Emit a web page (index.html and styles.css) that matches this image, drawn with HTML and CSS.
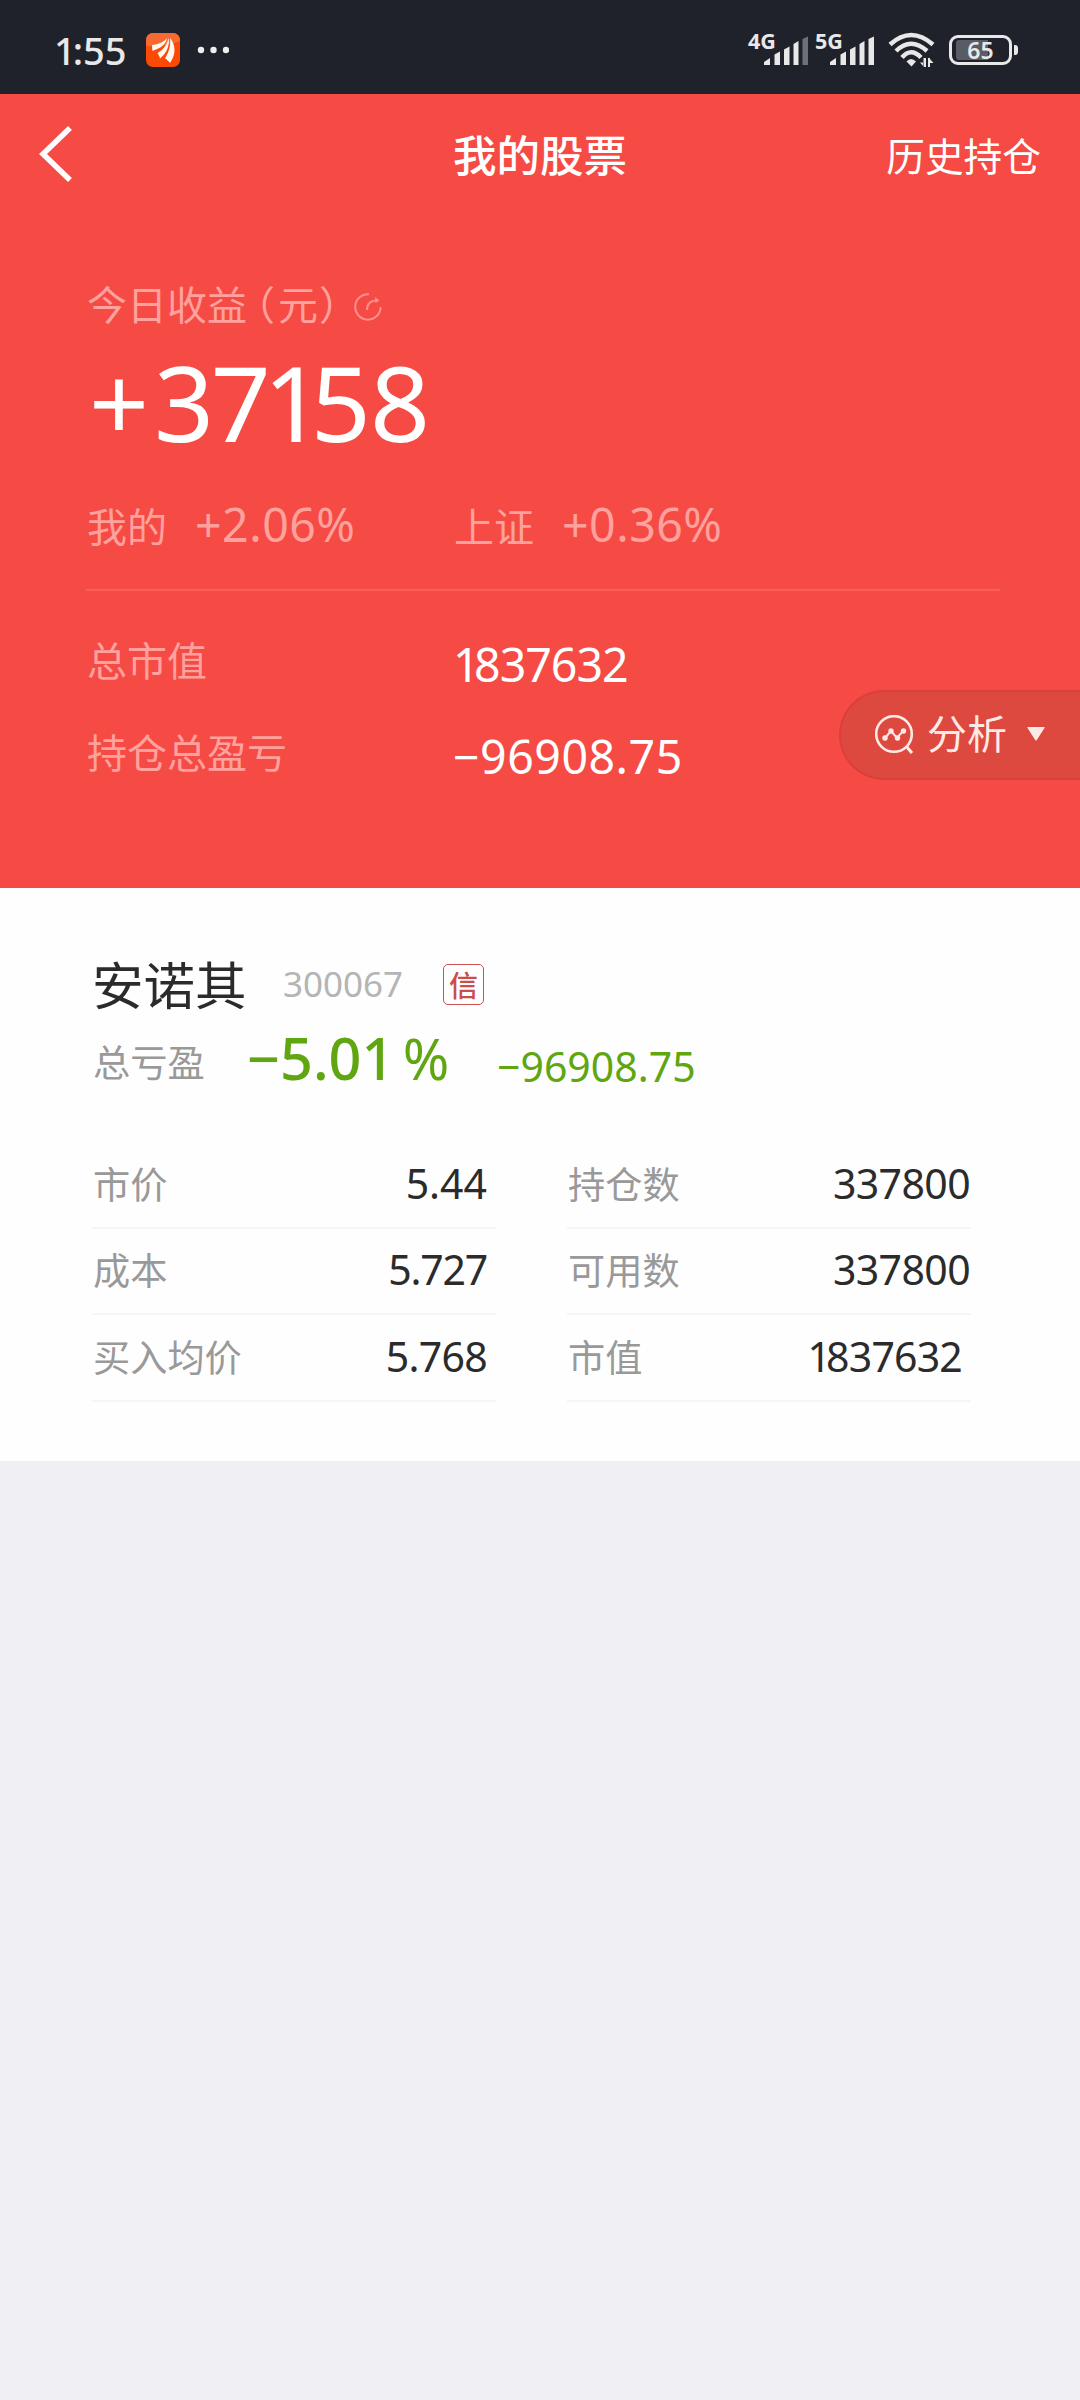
FILE: index.html
```html
<!DOCTYPE html>
<html lang="zh-CN">
<head>
<meta charset="utf-8">
<title>我的股票</title>
<link rel="stylesheet" href="styles.css">
</head>
<body>
<div class="status">
  <span class="clock"><span class="one">1</span>:55</span>
  <svg class="app-icon" width="34" height="34" viewBox="0 0 34 34">
    <rect width="34" height="34" rx="7" fill="#fc4a06"/>
    <path d="M7 0h20a7 7 0 0 1 7 7v1C24 12 12 14 0 13V7a7 7 0 0 1 7-7z" fill="#f96a33"/>
    <g fill="#fffaf2">
      <path d="M6 12C13 11.500 18 9 21 5C20 11 15 15 6.500 18C6.200 16 6 14 6 12z"/>
      <path d="M11.500 20C17 17 21 12 22.500 5C24 12 21 20 14 25.500C13.500 23 12.500 21.500 11.500 20z"/>
      <path d="M19 25.500C23 19 25 12 24 5C29.500 11 30.500 21 24 30C22.500 28 21 26.500 19 25.500z"/>
    </g>
  </svg>
  <svg class="dots" width="32" height="8" viewBox="0 0 32 8" fill="#eee"><circle cx="4" cy="4" r="3.200"/><circle cx="16.500" cy="4" r="3.200"/><circle cx="29" cy="4" r="3.200"/></svg>
  <div class="signals">
    <div class="net"><span class="gen">4G</span>
      <svg width="45" height="30" viewBox="0 0 45 30" fill="#e8e8e8"><path d="M0 29v-3l6-4v7zM10.500 29V18.500l5.500-3V29zM20 29V13.500l5.500-3V29zM29.500 29V8l5-3v24z"/><path d="M38.500 29V3L44 .5V29z" fill="#6d7078"/></svg>
    </div>
    <div class="net second"><span class="gen">5G</span>
      <svg width="45" height="30" viewBox="0 0 45 30" fill="#e8e8e8"><path d="M0 29v-3l6-4v7zM10.500 29V18.500l5.500-3V29zM20 29V13.500l5.500-3V29zM29.500 29V8l5-3v24zM38.500 29V3L44 .5V29z"/></svg>
    </div>
    <svg class="wifi" width="47" height="36" viewBox="0 0 47 36">
      <g fill="none" stroke="#e8e8e8" stroke-width="4.500"><path d="M2 12.500Q23 -6.500 45 12.500"/><path d="M8 19Q23 4.500 39 19"/><path d="M14 25.500Q23 15 33 25.500"/></g>
      <path d="M18.500 29.500Q23 24.500 28 29.500L23.500 34.500z" fill="#e8e8e8"/>
      <path d="M35.500 26v9h2.500v-9zM36 35l-4-4.500h4zM40 26h2v9h-2zM41 26l4.500 5H41z" fill="#e8e8e8"/>
    </svg>
    <div class="battery"><span class="level">65</span></div>
    <i class="nub"></i>
  </div>
</div>

<header class="hero">
  <nav class="nav">
    <svg class="back" width="34" height="56" viewBox="0 0 34 56"><path d="M31 2L4 28L31 54" fill="none" stroke="#fff" stroke-width="5.500"/></svg>
    <h1>我的股票</h1>
    <a class="history">历史持仓</a>
  </nav>
  <div class="summary">
    <div class="today">今日收益<span class="paren-open">（</span>元<span class="paren-close">）</span>
      <svg class="share" width="28" height="29" viewBox="0 0 28 29" fill="none" stroke="#fc8f8b" stroke-width="2"><path d="M15 1.300A12.700 12.700 0 1 0 26.600 14"/><path d="M13 17C13 11 16 7.500 23 7.500"/><path d="M21 4l4.500 3.500L21.500 10z" fill="#fc8f8b" stroke="none"/></svg>
    </div>
    <div class="profit"><span class="plus">+</span><span class="three">3</span><span class="seven">7</span><span class="one">1</span>58</div>
    <div class="rates cols">
      <div class="rate"><span class="label">我的</span><span class="pct">+2.06%</span></div>
      <div class="rate"><span class="label">上证</span><span class="pct">+0.36%</span></div>
    </div>
    <hr>
    <div class="totals">
      <div class="cols"><span class="label">总市值</span><span class="num market"><span class="one">1</span>837632</span></div>
      <div class="cols"><span class="label">持仓总盈亏</span><span class="num">−96908.75</span></div>
    </div>
  </div>
  <div class="analyse">
    <svg width="39" height="40" viewBox="0 0 39 40" fill="none" stroke="#ffe9e7"><circle cx="19" cy="19" r="17.800" stroke-width="2.600"/><path d="M31 31l6 7" stroke-width="3"/><path d="M10 23l6-7 6 7 6-7" stroke-width="2"/><g fill="#ffe9e7" stroke="none"><circle cx="10" cy="23" r="2.700"/><circle cx="16" cy="16" r="2.700"/><circle cx="22.500" cy="23" r="2.700"/><circle cx="28.500" cy="16" r="2.700"/></g></svg>
    <span>分析</span>
    <svg class="caret" width="18" height="14" viewBox="0 0 18 14"><path d="M1 0h16q1 0 .5 1L9.800 13q-.8 1-1.600 0L.5 1Q0 0 1 0z" fill="#ffe9e7"/></svg>
  </div>
</header>

<section class="stock">
  <div class="title"><span class="name">安诺其</span><span class="code">300067</span><span class="badge">信</span></div>
  <div class="loss"><span class="label">总亏盈</span><span class="big">−5.0<span class="one">1</span><span class="sign">%</span></span><span class="amount">−96908.75</span></div>
  <div class="table">
    <div class="cell"><span>市价</span><b>5.44</b></div>
    <div class="cell"><span>持仓数</span><b class="qty">337800</b></div>
    <div class="cell"><span>成本</span><b class="cost">5.727</b></div>
    <div class="cell"><span>可用数</span><b class="qty">337800</b></div>
    <div class="cell"><span>买入均价</span><b class="average">5.768</b></div>
    <div class="cell"><span>市值</span><b class="worth"><span class="one">1</span>837632</b></div>
  </div>
</section>
</body>
</html>
```
FILE: styles.css
```css
* { box-sizing: border-box; }
body {
  margin: 0;
  min-height: 2400px;
  background: #efeff4;
  font-family: "Noto Sans CJK SC", sans-serif;
  font-weight: 400;
  white-space: nowrap;
}
svg { display: block; flex: none; }
.one { letter-spacing: -.12em; }

.status {
  height: 94px;
  padding: 6px 62px 0 54px;
  display: flex;
  align-items: center;
  background: #1f222b;
  color: #e8e8e8;
  font-family: "Noto Sans", sans-serif;
}
.clock { width: 92px; font-size: 38px; font-weight: 500; line-height: 60px; }
.clock .one { letter-spacing: -.08em; }
.dots { margin-left: 17px; }
.signals { margin-left: auto; display: flex; align-items: center; }
.net { display: flex; align-items: flex-start; height: 34px; }
.net svg { margin: 3px 0 0 -12px; }
.gen { font-size: 21.500px; font-weight: 700; line-height: 15px; width: 28px; }
.second { margin-left: 6px; }
.second .gen { width: 27px; }
.wifi { margin-left: 13px; }
.battery {
  width: 63px;
  height: 30px;
  margin-left: 14px;
  border: 3px solid #e8e8e8;
  border-radius: 9px;
  padding: 2px 4px;
}
.level {
  display: block;
  height: 20px;
  line-height: 20px;
  border-radius: 3px;
  text-align: center;
  font-size: 23px;
  font-weight: 600;
  background: linear-gradient(90deg, #595c65 65%, transparent 65%);
}
.nub { width: 4px; height: 10px; margin-left: 2px; border-radius: 0 3px 3px 0; background: #e8e8e8; }

.hero { position: relative; height: 794px; background: #f64a45; color: #fff; }
.nav {
  height: 119px;
  padding: 0 39px 0 39px;
  display: grid;
  grid-template-columns: 1fr auto 1fr;
  align-items: center;
}
.back { margin-top: 1px; }
.nav h1 { margin: 0; font-size: 43.500px; font-weight: 500; line-height: 60px; }
.history { justify-self: end; font-size: 38.700px; line-height: 60px; }
.summary { padding: 60px 80px 0 86px; color: #ffa19d; }
.today { display: flex; align-items: center; height: 60px; padding-left: 1px; font-size: 40px; line-height: 60px; }
.paren-open, .paren-close { font-feature-settings: "halt"; }
.paren-open { margin: 0 3px 0 8px; }
.paren-close { margin-left: 1px; }
.share { margin: 8px 0 0 15px; }
.profit {
  margin-top: 14px;
  padding-left: 3px;
  font: 400 105px/110px "Noto Sans", sans-serif;
  color: #fff;
  letter-spacing: -.8px;
}
.profit .plus { letter-spacing: 5px; }
.profit .three { letter-spacing: -3.500px; }
.profit .seven { letter-spacing: -7.500px; }
.cols { display: grid; grid-template-columns: 367px 1fr; }
.rates { margin-top: 37px; }
.rate { display: flex; }
.label { padding-left: 1px; font-size: 40px; line-height: 60px; }
.rate .label { width: 109px; padding-top: 1px; height: 60px; }
.pct, .num { font-family: "Noto Sans", sans-serif; font-size: 46.500px; line-height: 60px; letter-spacing: .5px; }
hr { height: 2px; margin: 35px 0 38px; border: 0; background: #fa5e59; }
.totals { display: grid; gap: 27px; }
.num { padding-top: 5px; color: #fff; }
.market { letter-spacing: -1px; }
.analyse {
  position: absolute;
  right: 0;
  top: 596px;
  width: 241px;
  height: 90px;
  padding: 0 0 0 34px;
  display: flex;
  align-items: center;
  border: 2px solid #db3f3c;
  border-right: 0;
  border-radius: 45px 0 0 45px;
  background: #dd483f;
  color: #ffe9e7;
  font-size: 40px;
  line-height: 60px;
}
.analyse span { margin: -6px 0 0 13px; width: 100px; }
.analyse .caret { margin-top: -2px; }

.stock { height: 573px; padding: 59px 109px 0 92px; background: #fefefe; }
.title { display: flex; height: 70px; line-height: 70px; }
.name { width: 191px; padding-top: 1px; font-size: 51.500px; color: #2b2b2b; }
.code { width: 160px; padding-top: 2px; font-family: "Noto Sans", sans-serif; font-size: 35px; color: #b5b5b5; }
.badge {
  width: 41px;
  height: 41px;
  margin-top: 17px;
  border: 1.500px solid #cc5050;
  border-radius: 5px;
  text-align: center;
  font-size: 29px;
  font-weight: 500;
  line-height: 38px;
  color: #cc4b4b;
}
.loss { display: flex; height: 60px; margin: 10px 0 55px; line-height: 60px; }
.loss .label { width: 155px; padding-top: 4px; font-size: 37.300px; color: #999; }
.big, .amount { font-family: "Noto Sans", sans-serif; color: #5fa611; }
.big { width: 250px; padding-top: 1px; font-size: 57.500px; font-weight: 500; }
.big .one { letter-spacing: -.15em; }
.sign { margin-left: 17px; font-size: 56px; letter-spacing: -1px; font-weight: 400; }
.amount { padding-top: 9px; font-size: 41px; }
.table { display: grid; grid-template-columns: 404px 404px; column-gap: 71px; }
.cell {
  height: 86.600px;
  padding: 0 9px 3px 1px;
  display: flex;
  align-items: center;
  justify-content: space-between;
  border-bottom: 2px solid #f5f5f5;
  font-size: 37.200px;
  line-height: 60px;
  color: #999;
}
.cell b { font: 400 41px/60px "Noto Sans", sans-serif; color: #2b2b2b; }
.cell .qty { margin-right: -8px; letter-spacing: -.6px; }
.cell .cost { letter-spacing: -1.200px; }
.cell .average { letter-spacing: -.7px; }
.cell .worth { letter-spacing: -.8px; }
```
